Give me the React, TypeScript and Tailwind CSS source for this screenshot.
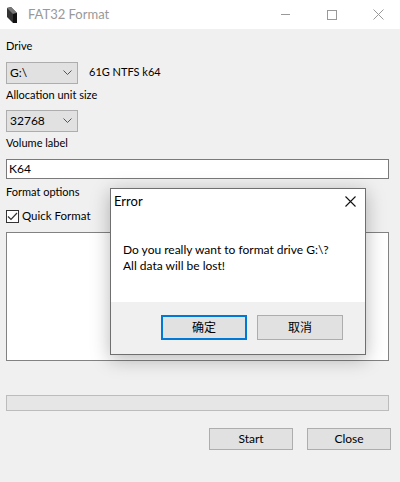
import React from 'react';

const font = { fontFamily: 'Lato, "Segoe UI", "Noto Sans CJK SC", sans-serif' };

// Combo box with a chevron on the right
const Combo = ({ value }: { value: string }) => (
  <div className="flex items-center justify-between w-[72px] h-[22px] bg-[#e1e1e1] border border-[#adadad] pl-[3px] pr-[5px] text-[12px] text-black">
    <span>{value}</span>
    <svg width="9" height="6" viewBox="0 0 9 6">
      <path d="M0.5 0.5 L4.5 4.5 L8.5 0.5" fill="none" stroke="#555" strokeWidth="1" />
    </svg>
  </div>
);

const WinButton = ({ label, primary }: { label: string; primary?: boolean }) => (
  <div
    className={
      'flex items-center justify-center bg-[#e1e1e1] text-[12px] text-black ' +
      (primary ? 'border-2 border-[#0078d7]' : 'border border-[#adadad]')
    }
    style={{ width: 86, height: 25 }}
  >
    {label}
  </div>
);

export default function App() {
  return (
    <div className="relative w-[400px] h-[482px] bg-[#f0f0f0] overflow-hidden text-black" style={font}>
      {/* Title bar */}
      <div className="flex items-center h-[29px] bg-white">
        <svg className="ml-[7px]" width="10" height="16" viewBox="0 0 10 16">
          <path d="M0 1 L4 0 L10 6 L10 16 L6 16 L0 10 Z" fill="#333" />
          <path d="M4 0 L10 6 L6 7 L0 1 Z" fill="#777" />
          <path d="M6 7 L10 6 L10 16 L6 16 Z" fill="#111" />
        </svg>
        <span className="ml-[11px] text-[13px] text-[#999]">FAT32 Format</span>
        <div className="flex-1" />
        <div className="w-[9px] h-px bg-[#999] mr-[37px]" />
        <div className="w-[10px] h-[10px] border border-[#999] mr-[36px]" />
        <svg className="mr-[16px]" width="11" height="11" viewBox="0 0 11 11">
          <path d="M0.5 0.5 L10.5 10.5 M10.5 0.5 L0.5 10.5" stroke="#999" strokeWidth="1" />
        </svg>
      </div>

      {/* Body */}
      <div className="px-[6px] text-[11px] leading-[16px]">
        <div className="mt-[9px]">Drive</div>
        <div className="flex items-center mt-[8px]">
          <Combo value="G:\" />
          <span className="ml-[11px] -mt-[3px]">61G NTFS k64</span>
        </div>
        <div className="mt-[3px]">Allocation unit size</div>
        <div className="mt-[7px]">
          <Combo value="32768" />
        </div>
        <div className="mt-[3px]">Volume label</div>
        <div className="mt-[8px] h-[20px] w-[383px] bg-white border border-[#7a7a7a] pl-[2px] flex items-center text-[12px]">K64</div>
        <div className="mt-[5px]">Format options</div>
        <div className="flex items-center mt-[8px]">
          <div className="w-[13px] h-[13px] bg-white border border-[#333] flex items-center justify-center">
            <svg width="11" height="9" viewBox="0 0 11 9">
              <path d="M1 4.5 L4 7.5 L10 1" fill="none" stroke="#333" strokeWidth="1.2" />
            </svg>
          </div>
          <span className="ml-[3px] text-[11.5px]">Quick Format</span>
        </div>
        <div className="mt-[8px] h-[129px] w-[383px] bg-white border border-[#828282]" />
        <div className="mt-[34px] h-[16px] w-[383px] bg-[#e6e6e6] border border-[#bcbcbc]" />
        <div className="flex justify-end gap-[14px] mt-[17px] pr-[3px] text-[12px]">
          <div className="flex items-center justify-center w-[84px] h-[22px] bg-[#e1e1e1] border border-[#adadad]">Start</div>
          <div className="flex items-center justify-center w-[84px] h-[22px] bg-[#e1e1e1] border border-[#adadad]">Close</div>
        </div>
      </div>

      {/* Error dialog */}
      <div className="absolute left-[110px] top-[188px] w-[256px] h-[167px] border border-[#6f6f6f] bg-white flex flex-col shadow-[0_4px_18px_rgba(0,0,0,0.28)] text-[12px] leading-[16px]">
        <div className="flex items-center justify-between h-[24px] pl-[3px] pr-[9px]">
          <span className="text-[13px]">Error</span>
          <svg width="11" height="11" viewBox="0 0 11 11">
            <path d="M0.5 0.5 L10.5 10.5 M10.5 0.5 L0.5 10.5" stroke="#111" strokeWidth="1.1" />
          </svg>
        </div>
        <div className="flex-1 pl-[12px] pt-[29px]">
          <div>Do you really want to format drive G:\?</div>
          <div>All data will be lost!</div>
        </div>
        <div className="h-[52px] bg-[#f0f0f0] flex items-start gap-[10px] pl-[50px] pt-[13px]">
          <WinButton label="确定" primary />
          <WinButton label="取消" />
        </div>
      </div>
    </div>
  );
}
